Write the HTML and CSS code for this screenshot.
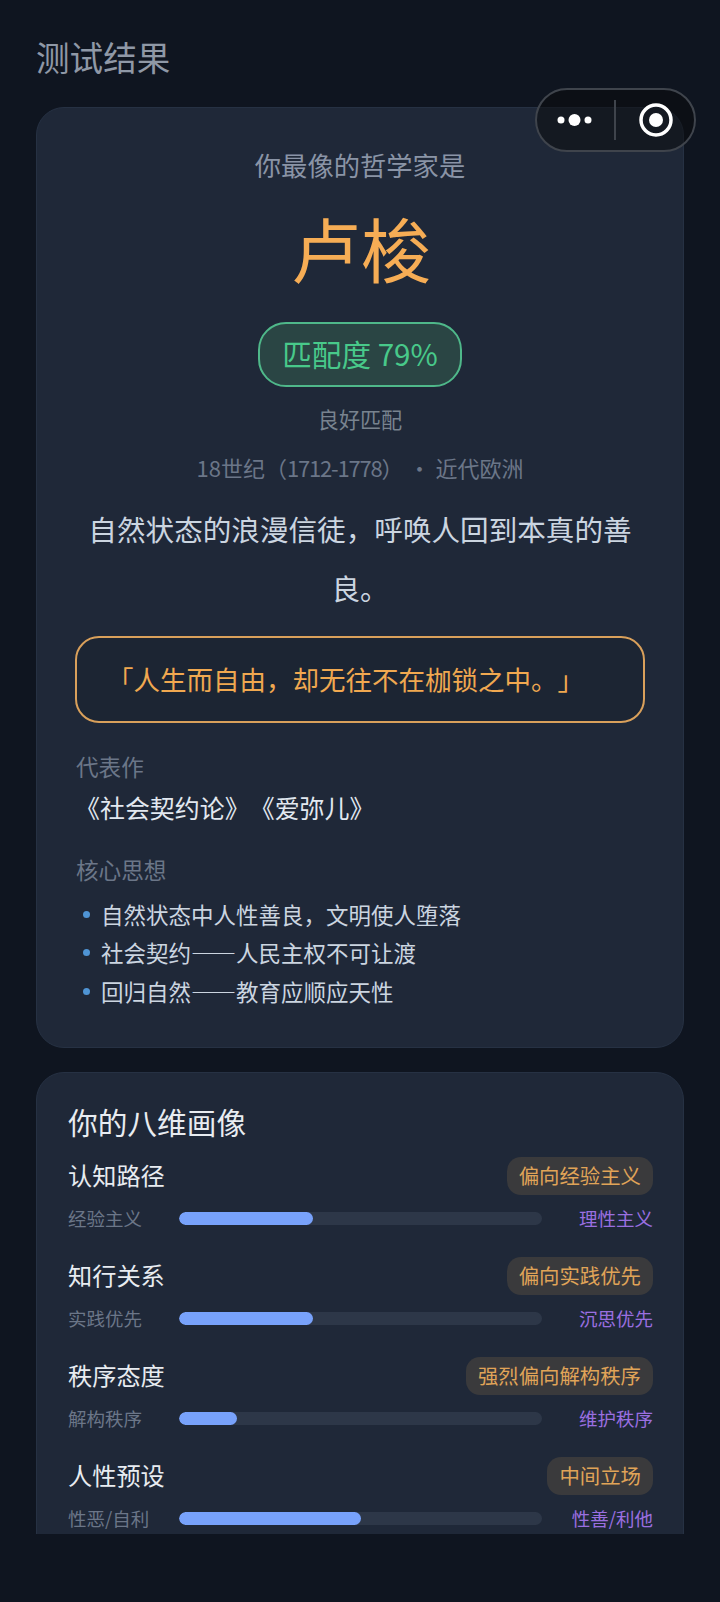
FILE: index.html
```html
<!DOCTYPE html>
<html lang="zh-CN">
<head>
    <meta charset="UTF-8">
    <meta name="viewport" content="width=device-width, initial-scale=1.0">
    <title>测试结果</title>
    <link rel="stylesheet" href="styles.css">
</head>
<body>
    <div class="page">
        <h1 class="page-title">测试结果</h1>

        <section class="card result-card">
            <p class="result-lead">你最像的哲学家是</p>
            <h2 class="result-name">卢梭</h2>
            <div class="match-pill">匹配度 79%</div>
            <p class="match-level">良好匹配</p>
            <p class="era">18世纪（<span class="era-years">1712-1778</span>） · 近代欧洲</p>
            <p class="motto">自然状态的浪漫信徒，呼唤人回到本真的善良。</p>
            <div class="quote">「人生而自由，却无往不在枷锁之中。」</div>

            <div class="section-label">代表作</div>
            <div class="works">《社会契约论》《爱弥儿》</div>

            <div class="section-label ideas-label">核心思想</div>
            <ul class="ideas">
                <li>自然状态中人性善良，文明使人堕落</li>
                <li>社会契约——人民主权不可让渡</li>
                <li>回归自然——教育应顺应天性</li>
            </ul>
        </section>

        <section class="card profile-card">
            <h3 class="profile-title">你的八维画像</h3>

            <div class="dim">
                <div class="dim-head">
                    <span class="dim-name">认知路径</span>
                    <span class="dim-tag">偏向经验主义</span>
                </div>
                <div class="dim-bar">
                    <span class="pole-left">经验主义</span>
                    <div class="track"><div class="fill" style="width: 37%"></div></div>
                    <span class="pole-right">理性主义</span>
                </div>
            </div>

            <div class="dim">
                <div class="dim-head">
                    <span class="dim-name">知行关系</span>
                    <span class="dim-tag">偏向实践优先</span>
                </div>
                <div class="dim-bar">
                    <span class="pole-left">实践优先</span>
                    <div class="track"><div class="fill" style="width: 37%"></div></div>
                    <span class="pole-right">沉思优先</span>
                </div>
            </div>

            <div class="dim">
                <div class="dim-head">
                    <span class="dim-name">秩序态度</span>
                    <span class="dim-tag">强烈偏向解构秩序</span>
                </div>
                <div class="dim-bar">
                    <span class="pole-left">解构秩序</span>
                    <div class="track"><div class="fill" style="width: 16%"></div></div>
                    <span class="pole-right">维护秩序</span>
                </div>
            </div>

            <div class="dim">
                <div class="dim-head">
                    <span class="dim-name">人性预设</span>
                    <span class="dim-tag">中间立场</span>
                </div>
                <div class="dim-bar">
                    <span class="pole-left">性恶/自利</span>
                    <div class="track"><div class="fill" style="width: 50%"></div></div>
                    <span class="pole-right">性善/利他</span>
                </div>
            </div>
        </section>
    </div>

    <div class="capsule">
        <svg class="capsule-dots" width="44" height="16" viewBox="0 0 44 16">
            <circle cx="8" cy="8" r="3.5" fill="#fff"/>
            <circle cx="21.5" cy="8" r="6" fill="#fff"/>
            <circle cx="35" cy="8" r="3.5" fill="#fff"/>
        </svg>
        <span class="capsule-line"></span>
        <svg class="capsule-target" width="36" height="36" viewBox="0 0 36 36">
            <circle cx="18" cy="18" r="15" fill="none" stroke="#fff" stroke-width="3.5"/>
            <circle cx="18" cy="18" r="7" fill="#fff"/>
        </svg>
    </div>
</body>
</html>
```

FILE: styles.css
```css
* {
    box-sizing: border-box;
}
html, body {
    margin: 0;
    height: 1602px;
    overflow: hidden;
}
body {
    position: relative;
    font-family: "Noto Sans CJK SC", "Noto Sans", sans-serif;
    background-color: #0f1520;
    color: #e2e8f0;
    text-spacing-trim: space-all;
}
h1, h2, h3, p, ul {
    margin: 0;
    padding: 0;
    font-weight: 400;
}
.page {
    height: 1534px;
    overflow: hidden;
    padding: 33px 36px 0 36px;
}
.page-title {
    font-size: 33.6px;
    line-height: 48px;
    color: #8f98a6;
    margin-bottom: 26px;
}
.card {
    background-color: #1f2838;
    border: 1px solid #263143;
    border-radius: 28px;
}
.result-card {
    height: 941px;
    padding: 38px 38px 0 38px;
    margin-bottom: 24px;
}
.result-lead {
    font-size: 26.3px;
    line-height: 38px;
    color: #8a94a6;
    text-align: center;
}
.result-name {
    font-size: 70px;
    line-height: 96px;
    color: #f6ad55;
    text-align: center;
    margin-top: 16px;
    padding-left: 2px;
}
.match-pill {
    width: 204px;
    height: 65px;
    margin: 26px auto 0 auto;
    border: 2px solid #4fb88a;
    border-radius: 28px;
    background-color: #2a4544;
    color: #48c98a;
    font-size: 29.6px;
    line-height: 60px;
    text-align: center;
}
.match-level {
    font-size: 21.12px;
    line-height: 30px;
    color: #78838f;
    text-align: center;
    margin-top: 17px;
}
.era {
    font-size: 22px;
    line-height: 32px;
    color: #6b7688;
    text-align: center;
    margin-top: 17px;
}
.era-years {
    letter-spacing: -1.2px;
}
.motto {
    font-size: 28.6px;
    line-height: 59px;
    color: #cbd5e0;
    text-align: center;
    margin-top: 16px;
}
.quote {
    height: 87px;
    border: 2px solid #d9a05b;
    border-radius: 24px;
    background-color: #1c2533;
    color: #f0a850;
    font-size: 26.5px;
    line-height: 81px;
    padding-left: 30px;
    margin-top: 19px;
}
.section-label {
    font-size: 22.6px;
    line-height: 32px;
    color: #6b7688;
    margin-top: 28px;
    padding-left: 1px;
}
.works {
    font-size: 24.96px;
    line-height: 36px;
    color: #e2e8f0;
    margin-top: 6px;
}
.ideas-label {
    margin-top: 29px;
}
.ideas {
    list-style: none;
    margin-top: 9px;
}
.ideas li {
    position: relative;
    padding-left: 26px;
    font-size: 22.5px;
    line-height: 38.4px;
    color: #cbd5e0;
}
.ideas li::before {
    content: "";
    position: absolute;
    left: 8px;
    top: 16px;
    width: 7px;
    height: 7px;
    border-radius: 50%;
    background-color: #4f94d4;
}
.profile-card {
    padding: 28px 30px 0 31px;
    height: 560px;
}
.profile-title {
    font-size: 29.7px;
    line-height: 42px;
    color: #e8ecf1;
}
.dim {
    margin-bottom: 24px;
}
.dim-head {
    display: flex;
    justify-content: space-between;
    align-items: center;
    height: 38px;
    margin-top: 14px;
}
.dim-name {
    font-size: 24.2px;
    padding-bottom: 4px;
    color: #e8ecf1;
}
.dim-tag {
    height: 38px;
    line-height: 36px;
    padding: 0 12px;
    border-radius: 14px;
    background-color: #3a3a3c;
    color: #e0a458;
    font-size: 20.4px;
}
.dim-bar {
    display: grid;
    grid-template-columns: 96px 1fr 96px;
    align-items: center;
    column-gap: 15px;
    margin-top: 8px;
    height: 30px;
}
.pole-left, .pole-right {
    font-size: 18.5px;
    line-height: 28px;
    white-space: nowrap;
}
.pole-left {
    color: #6b7688;
}
.pole-right {
    color: #9a6fe0;
    text-align: right;
}
.track {
    height: 13px;
    border-radius: 7px;
    background-color: #2d3748;
    overflow: hidden;
}
.fill {
    height: 100%;
    border-radius: 7px;
    background-color: #78a2fb;
}
.capsule {
    position: absolute;
    left: 535px;
    top: 88px;
    width: 161px;
    height: 64px;
    display: flex;
    align-items: center;
    border: 2px solid #3f444c;
    border-radius: 32px;
    background-color: rgba(10, 10, 10, 0.5);
}
.capsule-dots {
    margin-left: 16px;
}
.capsule-line {
    width: 2px;
    height: 40px;
    margin-left: 17px;
    background-color: #3f444c;
}
.capsule-target {
    margin-left: 22px;
}
```
